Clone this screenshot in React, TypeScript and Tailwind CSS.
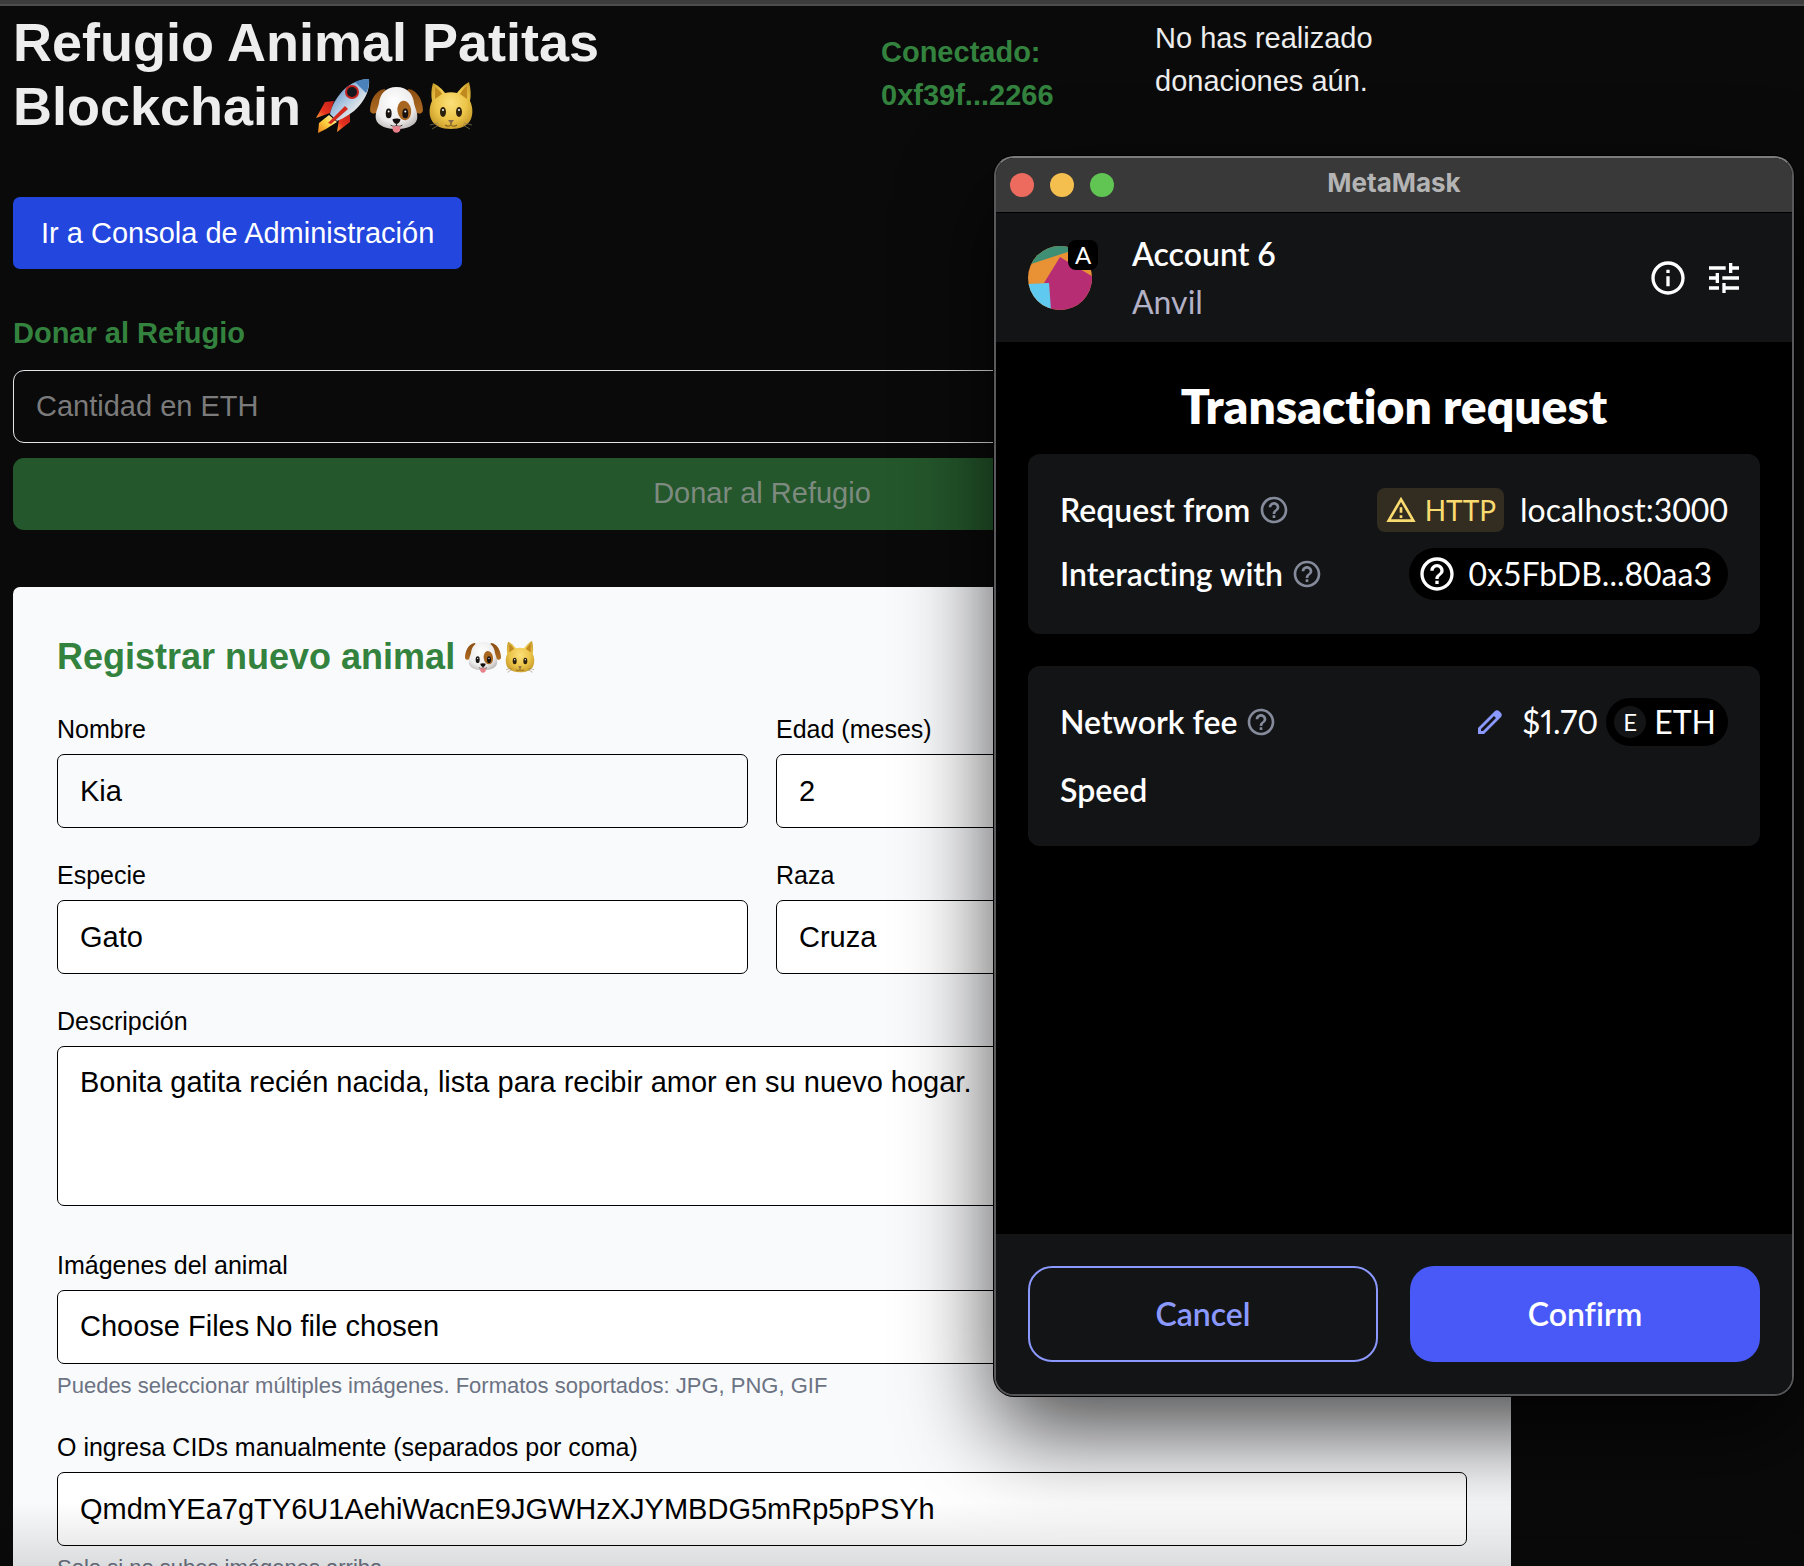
import type { InputHTMLAttributes, ReactNode } from "react";
import {
  MdHelpOutline,
  MdInfoOutline,
  MdOutlineWarningAmber,
  MdTune,
} from "react-icons/md";

function Rocket({ className }: { className: string }) {
  return (
    <svg viewBox="0 0 54 54" className={className} role="img" aria-label="cohete">
      <defs>
        <linearGradient id="hull" x1="0" y1="0" x2="1" y2="1">
          <stop offset="0" stopColor="#3f74b0" />
          <stop offset="0.45" stopColor="#a9c6e2" />
          <stop offset="0.7" stopColor="#e3e6e8" />
          <stop offset="1" stopColor="#8c949b" />
        </linearGradient>
        <linearGradient id="fin" x1="1" y1="0" x2="0" y2="1">
          <stop offset="0" stopColor="#c4201a" />
          <stop offset="0.6" stopColor="#e8331f" />
          <stop offset="1" stopColor="#f8a13a" />
        </linearGradient>
        <linearGradient id="flame" x1="1" y1="0" x2="0" y2="1">
          <stop offset="0" stopColor="#fff6b8" />
          <stop offset="0.5" stopColor="#fbd23f" />
          <stop offset="1" stopColor="#ef7d1d" />
        </linearGradient>
      </defs>
      <path d="M18 22 L9 23 L0 39 L14 34 Z" fill="url(#fin)" />
      <path d="M34 35 L34 43 L21 53 L23 40 Z" fill="url(#fin)" />
      <path d="M13 36 L3 44 L2 54 L10 50 L21 43 Z" fill="url(#flame)" />
      <path d="M53 0 C41 0 30 7 24 15 C18 22 15 30 14 35 L21 42 C28 39 37 34 43 27 C50 19 54 10 53 0 Z" fill="url(#hull)" />
      <path d="M53 0 C48 0 43 1 39 3 L50 14 C53 9 53 4 53 0 Z" fill="#4b81bb" />
      <path d="M29 27 L12 44 L15 45 L32 30 Z" fill="#d4281c" />
      <circle cx="36" cy="13" r="7" fill="#c5221f" />
      <circle cx="36" cy="13" r="5" fill="#15171c" />
    </svg>
  );
}

function Dog({ className }: { className: string }) {
  return (
    <svg viewBox="0 0 54 48" className={className} role="img" aria-label="perro">
      <defs>
        <radialGradient id="dogFace" cx="0.45" cy="0.35" r="0.7">
          <stop offset="0" stopColor="#ffffff" />
          <stop offset="0.7" stopColor="#eceaea" />
          <stop offset="1" stopColor="#bdb9b8" />
        </radialGradient>
        <linearGradient id="dogEar" x1="0" y1="0" x2="0" y2="1">
          <stop offset="0" stopColor="#8a4d12" />
          <stop offset="1" stopColor="#b06c22" />
        </linearGradient>
      </defs>
      <path d="M15 3 C5 4 0 16 0 25 C1 30 8 29 10 23 L18 8 Z" fill="url(#dogEar)" />
      <path d="M39 3 C49 4 54 16 54 25 C53 30 46 29 44 23 L36 8 Z" fill="url(#dogEar)" />
      <path d="M27 1 C16 1 10 8 9 18 C7 25 5 28 6 34 C8 41 17 44 27 44 C37 44 46 41 48 34 C49 28 47 25 45 18 C44 8 38 1 27 1 Z" fill="url(#dogFace)" />
      <ellipse cx="35" cy="25" rx="7" ry="10" fill="#a8651f" transform="rotate(-8 35 25)" />
      <ellipse cx="19" cy="28" rx="3" ry="5" fill="#17120f" />
      <ellipse cx="36" cy="28" rx="3" ry="5" fill="#17120f" />
      <circle cx="19" cy="26" r="1" fill="#fff" />
      <circle cx="36" cy="26" r="1" fill="#fff" />
      <path d="M23 34 C25 33 29 33 31 34 C31 37 28 39 27 39 C26 39 23 37 23 34 Z" fill="#120d0c" />
      <path d="M27 38 V41 M21 40 C24 42 26 41 27 40 C28 41 30 42 33 40" stroke="#3a2f2c" fill="none" />
      <path d="M23 41 H31 V44 C31 49 23 49 23 44 Z" fill="#e8808c" />
    </svg>
  );
}

function Cat({ className }: { className: string }) {
  return (
    <svg viewBox="0 0 44 48" className={className} role="img" aria-label="gato">
      <defs>
        <radialGradient id="catFace" cx="0.5" cy="0.45" r="0.6">
          <stop offset="0" stopColor="#fbe07a" />
          <stop offset="0.6" stopColor="#ecc548" />
          <stop offset="1" stopColor="#c79a2a" />
        </radialGradient>
      </defs>
      <path d="M4 1 C9 3 14 8 16 11 C20 10 24 10 28 11 C31 7 36 2 40 0 C42 7 42 14 41 19 C44 25 44 32 42 37 C39 44 31 47 22 47 C13 47 5 44 2 37 C0 32 0 25 3 19 C2 14 2 7 4 1 Z" fill="url(#catFace)" />
      <path d="M6 5 C9 7 12 10 13 12 L6 17 Z" fill="#c08a1f" />
      <path d="M38 4 C35 6 32 10 31 12 L38 17 Z" fill="#c08a1f" />
      <ellipse cx="14" cy="30" rx="3" ry="5" fill="#2b210c" />
      <ellipse cx="30" cy="30" rx="3" ry="5" fill="#2b210c" />
      <circle cx="14" cy="28" r="1" fill="#fff" />
      <circle cx="30" cy="28" r="1" fill="#fff" />
      <path d="M19 38 H25 L22 42 Z" fill="#8b6a4a" />
      <path d="M22 41 V43 M16 43 C19 45 21 44 22 43 C23 44 25 45 28 43" stroke="#6b4d18" fill="none" />
      <path d="M9 41 L1 43 M10 43 L3 47 M35 41 L43 43 M34 43 L41 47" stroke="#8a7a55" strokeWidth="0.7" fill="none" />
    </svg>
  );
}

function Pencil() {
  return (
    <svg viewBox="0 0 24 24" className="size-6" aria-hidden="true">
      <path
        fill="#8b99ff"
        fillRule="evenodd"
        d="M0 24 V18 L17 1 C18 0 20 0 21 1 L23 3 C24 4 24 6 23 7 L6 24 Z M3 19 V21 H5 L18 8 L16 6 Z"
      />
    </svg>
  );
}

const fieldClass =
  "block w-full rounded-[7px] border border-black px-[22px] text-[29px] leading-[43px] text-black outline-none";

function Field({
  id,
  label,
  hint,
  children,
}: {
  id: string;
  label: string;
  hint?: string;
  children: ReactNode;
}) {
  return (
    <div>
      <label htmlFor={id} className="mb-[7px] block text-[25px] leading-9 text-black">
        {label}
      </label>
      {children}
      {hint && (
        <p className="mt-[7px] text-[22px] leading-[29px] text-[#6c7383]">{hint}</p>
      )}
    </div>
  );
}

function TextField({
  id,
  label,
  hint,
  plain,
  ...rest
}: { id: string; label: string; hint?: string; plain?: boolean } & InputHTMLAttributes<HTMLInputElement>) {
  return (
    <Field id={id} label={label} hint={hint}>
      <input
        id={id}
        className={`${fieldClass} h-[74px] ${plain ? "bg-transparent" : "bg-white"}`}
        {...rest}
      />
    </Field>
  );
}

function AnimalForm() {
  return (
    <form className="mt-[57px] rounded-t-[7px] bg-[#f9fafc] p-11">
      <h2 className="mb-[29px] flex items-center text-4xl leading-[51px] font-bold text-[#33833f]">
        Registrar nuevo animal
        <Dog className="ml-[10px] h-8 w-9" />
        <Cat className="ml-1 h-8 w-[30px]" />
      </h2>
      <div className="flex flex-col gap-[29px]">
        <div className="grid grid-cols-2 gap-x-7 gap-y-[29px]">
          <TextField id="nombre" label="Nombre" defaultValue="Kia" plain />
          <TextField id="edad" label="Edad (meses)" defaultValue="2" />
          <TextField id="especie" label="Especie" defaultValue="Gato" />
          <TextField id="raza" label="Raza" defaultValue="Cruza" />
        </div>
        <Field id="descripcion" label="Descripción">
          <textarea
            id="descripcion"
            className={`${fieldClass} mb-3 h-40 resize-none bg-white py-[14px]`}
            defaultValue="Bonita gatita recién nacida, lista para recibir amor en su nuevo hogar."
          />
        </Field>
        <Field
          id="imagenes"
          label="Imágenes del animal"
          hint="Puedes seleccionar múltiples imágenes. Formatos soportados: JPG, PNG, GIF"
        >
          <input
            id="imagenes"
            type="file"
            multiple
            className={`${fieldClass} h-[74px] bg-white py-[14px] file:mr-[6px]`}
          />
        </Field>
        <TextField
          id="cids"
          label="O ingresa CIDs manualmente (separados por coma)"
          hint="Solo si no subes imágenes arriba."
          defaultValue="QmdmYEa7gTY6U1AehiWacnE9JGWHzXJYMBDG5mRp5pPSYh"
        />
      </div>
    </form>
  );
}

function ShelterPage() {
  return (
    <main className="ml-[13px] max-w-[1498px] pt-1">
      <header className="grid grid-cols-[868fr_274fr_356fr] items-center">
        <h1 className="pr-20 text-[54px] leading-[64px] font-bold text-[#ededed]">
          Refugio Animal Patitas
          <br />
          Blockchain
          <Rocket className="ml-[15px] inline-block size-[54px] align-[-8px]" />
          <Dog className="inline-block h-[47px] w-[53px] align-[-8px]" />
          <Cat className="ml-[6px] inline-block h-12 w-11 align-[-5px]" />
        </h1>
        <p className="pr-20 text-[29px] leading-[43px] font-bold text-[#33833f]">
          Conectado: 0xf39f...2266
        </p>
        <p className="mb-[29px] pr-20 text-[29px] leading-[43px] text-[#ededed]">
          No has realizado donaciones aún.
        </p>
      </header>
      <a
        href="#admin"
        className="mt-[59px] block w-fit rounded-[7px] bg-[#2246de] px-7 py-[14px] text-[29px] leading-[44px] text-white"
      >
        Ir a Consola de Administración
      </a>
      <section className="mt-[43px]">
        <h2 className="text-[29px] leading-[43px] font-bold text-[#33833f]">
          <label htmlFor="cantidad">Donar al Refugio</label>
        </h2>
        <input
          id="cantidad"
          placeholder="Cantidad en ETH"
          className="mt-[15px] block h-[73px] w-full rounded-[11px] border border-[#e4e6ea] bg-transparent px-[22px] text-[29px] text-[#ededed] outline-none placeholder:text-[#7b7b7b]"
        />
        <button
          type="button"
          disabled
          className="mt-[15px] block h-[72px] w-full rounded-[11px] bg-[#24572b] text-[29px] text-[#7d8a7f]"
        >
          Donar al Refugio
        </button>
      </section>
      <AnimalForm />
    </main>
  );
}

function Row({ label, help, children }: { label: string; help?: boolean; children?: ReactNode }) {
  return (
    <div className="flex h-[52px] items-center justify-between">
      <div className="flex items-center gap-2 font-semibold">
        {label}
        {help && <MdHelpOutline className="size-8 text-[#858b9a]" />}
      </div>
      <div className="flex items-center">{children}</div>
    </div>
  );
}

function Avatar() {
  return (
    <div className="relative size-16">
      <svg viewBox="0 0 64 64" className="size-16 rounded-full" aria-hidden="true">
        <rect width="64" height="64" fill="#e89135" />
        <path d="M0 19 L64 -2 V-10 H0 Z" fill="#3f8f74" />
        <path d="M32 11 L70 34 V64 H22 L21 37 L16 37 Z" fill="#b72d74" />
        <path d="M0 38 L21 37 L23 64 H0 Z" fill="#5fc9ef" />
      </svg>
      <span className="absolute -top-[6px] -right-[6px] flex size-[30px] items-center justify-center rounded-lg bg-black text-2xl text-white">
        A
      </span>
    </div>
  );
}

function WalletWindow() {
  return (
    <section
      aria-label="MetaMask"
      className="absolute top-[156px] right-[10px] flex h-[1240px] w-[800px] flex-col overflow-hidden rounded-[20px] border-2 border-t-[#7c7c7c] border-r-[#5a5a5c] border-b-[#555557] border-l-[#5a5a5c] bg-black font-['Lato','Liberation_Sans',sans-serif] text-[32px] leading-[48px] text-white shadow-[0_0_0_1px_#000,0_36px_90px_rgba(0,0,0,0.7)] [font-variant-ligatures:none]"
    >
      <div className="grid h-[55px] shrink-0 grid-cols-[1fr_auto_1fr] items-center border-b border-black bg-[#393939] px-[14px]">
        <div className="flex gap-4">
          <button type="button" aria-label="Cerrar" className="size-6 rounded-full bg-[#ed6a5e]" />
          <button type="button" aria-label="Minimizar" className="size-6 rounded-full bg-[#f5bf4f]" />
          <button type="button" aria-label="Ampliar" className="size-6 rounded-full bg-[#61c554]" />
        </div>
        <span className="pb-1 font-['Inter',sans-serif] text-[26px] leading-8 font-bold text-[#b4b4b4]">
          MetaMask
        </span>
      </div>
      <header className="flex h-[129px] shrink-0 items-center bg-[#131416] pr-12 pl-8">
        <Avatar />
        <div className="ml-10 grow">
          <p className="font-semibold">Account 6</p>
          <p className="text-[#b3b1c6]">Anvil</p>
        </div>
        <div className="flex gap-4">
          <button type="button" aria-label="Información">
            <MdInfoOutline className="size-10" />
          </button>
          <button type="button" aria-label="Ajustes">
            <MdTune className="size-10" />
          </button>
        </div>
      </header>
      <div className="flex grow flex-col px-8 pt-8">
        <h2 className="mb-4 text-center text-5xl leading-[64px] font-extrabold">
          Transaction request
        </h2>
        <div className="mb-8 flex h-[180px] flex-col gap-3 rounded-xl bg-[#131416] px-8 pt-[30px]">
          <Row label="Request from" help>
            <span className="mr-4 flex h-11 items-center gap-2 rounded-lg bg-[#322d20] px-2 text-[28px] text-[#fadb70]">
              <MdOutlineWarningAmber className="size-8" />
              HTTP
            </span>
            localhost:3000
          </Row>
          <Row label="Interacting with" help>
            <span className="flex h-[52px] items-center gap-3 rounded-full bg-black pr-4 pl-2">
              <MdHelpOutline className="size-10" />
              0x5FbDB...80aa3
            </span>
          </Row>
        </div>
        <div className="flex h-[180px] flex-col gap-4 rounded-xl bg-[#131416] px-8 pt-[30px]">
          <Row label="Network fee" help>
            <button type="button" aria-label="Editar" className="mr-5">
              <Pencil />
            </button>
            <span className="proportional-nums">$1.70</span>
            <span className="ml-2 flex h-12 items-center gap-2 rounded-full bg-black pr-3 pl-2">
              <span className="flex size-8 items-center justify-center rounded-full bg-[#131416] text-2xl">
                E
              </span>
              ETH
            </span>
          </Row>
          <Row label="Speed" />
        </div>
      </div>
      <footer className="grid shrink-0 grid-cols-2 gap-8 bg-[#131416] p-8">
        <button
          type="button"
          className="h-24 rounded-3xl border-2 border-[#8b99ff] font-semibold text-[#8b99ff]"
        >
          Cancel
        </button>
        <button type="button" className="h-24 rounded-3xl bg-[#4859f7] font-semibold">
          Confirm
        </button>
      </footer>
    </section>
  );
}

export default function App() {
  return (
    <div className="relative h-screen overflow-hidden bg-[#0a0a0a] font-['Liberation_Sans',Arial,sans-serif]">
      <div className="h-[6px] border-b-2 border-[#4c4c4c] bg-[#3c3c3c]" />
      <ShelterPage />
      <div className="pointer-events-none absolute inset-x-0 bottom-0 h-16 bg-linear-to-t from-black/12 to-transparent" />
      <WalletWindow />
    </div>
  );
}
